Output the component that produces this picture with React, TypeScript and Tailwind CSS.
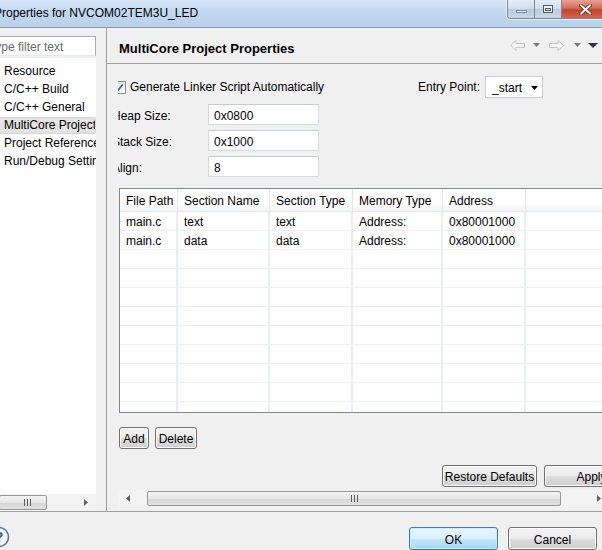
import React from "react";

function WinButton({ children, className = "" }: { children: React.ReactNode; className?: string }) {
  return (
    <div
      className={
        "h-[22px] shrink-0 flex items-center justify-center pt-[2px] rounded-[3px] border border-[#707070] bg-[linear-gradient(180deg,#f2f2f2_0%,#ebebeb_50%,#dddddd_51%,#cfcfcf_100%)] shadow-[inset_0_0_0_1px_#fcfcfc] text-[12px] text-black whitespace-nowrap " +
        className
      }
    >
      {children}
    </div>
  );
}

function Checkbox() {
  return (
    <div className="w-[13px] h-[13px] shrink-0 border border-[#8e8f8f] bg-[linear-gradient(135deg,#dcdcdc_0%,#ffffff_100%)] p-[2px] flex">
      <div className="flex-1 bg-[linear-gradient(135deg,#e6e6e6,#fbfbfb)] relative">
        <svg width="9" height="9" viewBox="0 0 9 9" className="absolute -left-[1px] -top-[1px]">
          <path d="M1.5 4.5 L3.5 6.8 L7.8 1.2" fill="none" stroke="#4a5f97" strokeWidth="1.7" />
        </svg>
      </div>
    </div>
  );
}

function Field({ value }: { value: string }) {
  return (
    <div className="w-[111px] h-[21px] shrink-0 bg-white border border-[#d5dae2] border-t-[#c6cbd3] flex items-center pl-[5px] pt-[2px] text-[12px]">
      {value}
    </div>
  );
}

function LeftArrowTri() {
  return (
    <svg width="4" height="7" viewBox="0 0 4 7">
      <path d="M4 0 L0 3.5 L4 7 Z" fill="#606060" />
    </svg>
  );
}
function RightArrowTri() {
  return (
    <svg width="4" height="7" viewBox="0 0 4 7">
      <path d="M0 0 L4 3.5 L0 7 Z" fill="#606060" />
    </svg>
  );
}

function Grip() {
  return (
    <div className="flex gap-[2px]">
      <div className="w-[1px] h-[7px] bg-[#5b5b5b]" />
      <div className="w-[1px] h-[7px] bg-[#5b5b5b]" />
      <div className="w-[1px] h-[7px] bg-[#5b5b5b]" />
    </div>
  );
}

const cols = ["File Path", "Section Name", "Section Type", "Memory Type", "Address"];

const rows = [
  ["main.c", "text", "text", "Address:", "0x80001000"],
  ["main.c", "data", "data", "Address:", "0x80001000"],
  ["", "", "", "", ""],
  ["", "", "", "", ""],
  ["", "", "", "", ""],
  ["", "", "", "", ""],
  ["", "", "", "", ""],
  ["", "", "", "", ""],
  ["", "", "", "", ""],
  ["", "", "", "", ""],
  ["", "", "", "", ""],
];

const colClasses = ["w-[58px]", "w-[92px]", "w-[83px]", "w-[90px]", "w-[83px]"];

export default function App() {
  return (
    <div className="w-[602px] h-[550px] overflow-hidden bg-[#f0f0f0] flex flex-col text-[12px] leading-none text-black font-['Liberation_Sans',Arial,sans-serif]">
      {/* Title bar */}
      <div className="h-[28px] shrink-0 border-b border-[#8d9aa8] bg-[linear-gradient(180deg,#d6e6f7_0%,#c3d9f0_40%,#b9d0ea_100%)] flex overflow-hidden">
        <div className="w-[513px] shrink-0 -ml-[6px] pt-[7px] text-[12px] text-black whitespace-nowrap">
          Properties for NVCOM02TEM3U_LED
        </div>
        <div className="flex shrink-0 h-[19px] rounded-bl-[4px] border border-t-0 border-[#7b8898] overflow-hidden shadow-[0_0_0_1px_rgba(255,255,255,0.6)]">
          <div className="w-[27px] h-full flex items-center justify-center bg-[linear-gradient(180deg,#e4eef9_0%,#cddcec_50%,#b9cadd_51%,#c9d8e8_100%)] border-r border-[#7b8898]">
            <div className="w-[11px] h-[3px] mt-[4px] bg-[#eef2f7] border border-[#7f8da0]" />
          </div>
          <div className="w-[27px] h-full flex items-center justify-center bg-[linear-gradient(180deg,#e4eef9_0%,#cddcec_50%,#b9cadd_51%,#c9d8e8_100%)] border-r border-[#7b8898]">
            <div className="w-[10px] h-[8px] border border-[#4e5d70] bg-[#eef2f7] flex items-center justify-center">
              <div className="w-[6px] h-[3px] border border-[#4e5d70] mt-[1px]" />
            </div>
          </div>
          <div className="w-[44px] h-full flex items-center justify-center bg-[linear-gradient(180deg,#e8a393_0%,#d46c58_45%,#c2432d_55%,#d6654a_100%)]">
            <svg width="13" height="11" viewBox="0 0 13 11" className="ml-[2px]">
              <path d="M2 1.5 L11 9.5 M11 1.5 L2 9.5" stroke="#5a2a22" strokeWidth="3.6" strokeLinecap="square" />
              <path d="M2 1.5 L11 9.5 M11 1.5 L2 9.5" stroke="#ffffff" strokeWidth="2" strokeLinecap="square" />
            </svg>
          </div>
        </div>
      </div>

      {/* Main */}
      <div className="h-[484px] shrink-0 flex border-b border-[#a0a0a0]">
        {/* Left panel */}
        <div className="w-[107px] shrink-0 border-r border-[#a0a0a0] flex flex-col">
          <div className="pt-[8px] pb-[2px] w-[96px]">
            <div className="w-[109px] -ml-[13px] h-[20px] bg-white border border-[#abadb3] border-b-[#e3e9ef] flex items-center pl-[4px] pt-[1px] text-[#6d6d6d] whitespace-nowrap">
              type filter text
            </div>
          </div>
          <div className="w-[96px] flex-1 bg-white flex flex-col overflow-hidden">
            <div className="flex-1 pt-[4px] flex flex-col">
              {["Resource", "C/C++ Build", "C/C++ General", "MultiCore Project Properties", "Project References", "Run/Debug Settings"].map(
                (t, i) => (
                  <div key={t} className="h-[18px] flex items-center">
                    <div
                      className={
                        "w-[96px] h-[17px] flex items-center pl-[4px] whitespace-nowrap overflow-hidden " +
                        (i === 3 ? "bg-[#e3e3e3] border border-l-0 border-[#d6d6d6] rounded-r-[2px]" : "")
                      }
                    >
                      {t}
                    </div>
                  </div>
                )
              )}
            </div>
            <div className="h-[17px] shrink-0 bg-[#f3f3f3] flex items-center">
              <div className="w-[48px] h-[15px] rounded-[2px] border border-[#979797] bg-[linear-gradient(180deg,#f3f3f3_0%,#e8e8e8_50%,#d6d6d6_51%,#e0e0e0_100%)] flex items-center justify-center pl-[8px] -ml-[1px]">
                <Grip />
              </div>
              <div className="ml-[37px]">
                <RightArrowTri />
              </div>
            </div>
          </div>
        </div>

        {/* Right panel */}
        <div className="flex-1 flex flex-col min-w-0">
          <div className="h-[36px] shrink-0 border-b border-[#a0a0a0] flex items-center pl-[12px] pt-[5px]">
            <div className="font-bold text-[13px] whitespace-nowrap">MultiCore Project Properties</div>
            <div className="flex-1" />
            <div className="flex items-center -mt-[6px] w-[92px] shrink-0 ml-[2px]">
              <svg width="15" height="11" viewBox="0 0 15 11">
                <path d="M0.5 5.5 L6 0.5 L6 3.5 L14.5 3.5 L14.5 7.5 L6 7.5 L6 10.5 Z" fill="#f7f7f7" stroke="#c2c2c2" />
              </svg>
              <svg width="7" height="4" viewBox="0 0 7 4" className="ml-[8px]">
                <path d="M0 0 L7 0 L3.5 4 Z" fill="#7b7b7b" />
              </svg>
              <svg width="15" height="11" viewBox="0 0 15 11" className="ml-[9px]">
                <path d="M14.5 5.5 L9 0.5 L9 3.5 L0.5 3.5 L0.5 7.5 L9 7.5 L9 10.5 Z" fill="#f7f7f7" stroke="#c2c2c2" />
              </svg>
              <svg width="7" height="4" viewBox="0 0 7 4" className="ml-[10px]">
                <path d="M0 0 L7 0 L3.5 4 Z" fill="#7b7b7b" />
              </svg>
              <svg width="10" height="5" viewBox="0 0 10 5" className="ml-[7px]">
                <path d="M0 0 L10 0 L5 5 Z" fill="#2f2f5c" />
              </svg>
            </div>
          </div>

          <div className="flex-1 pl-[11px] flex flex-col min-w-0">
            <div className="flex-1 overflow-hidden flex flex-col">
              {/* Checkbox + entry */}
              <div className="mt-[12px] h-[22px] flex items-center mr-[59px]">
                <div className="-ml-[5px] flex items-center">
                  <Checkbox />
                  <span className="ml-[4px] whitespace-nowrap">Generate Linker Script Automatically</span>
                </div>
                <div className="flex-1" />
                <span className="whitespace-nowrap mr-[5px]">Entry Point:</span>
                <div className="w-[58px] h-[22px] bg-white border border-[#c9ccd2] flex items-center pl-[6px] pt-[1px] justify-between pr-[4px]">
                  <span>_start</span>
                  <svg width="7" height="4" viewBox="0 0 7 4">
                    <path d="M0 0 L7 0 L3.5 4 Z" fill="#000" />
                  </svg>
                </div>
              </div>

              {/* Fields */}
              <div className="mt-[6px] flex flex-col gap-[5px]">
                {[
                  ["Heap Size:", "0x0800"],
                  ["Stack Size:", "0x1000"],
                  ["Align:", "8"],
                ].map(([l, v]) => (
                  <div key={l} className="flex items-center h-[21px]">
                    <div className="w-[96px] -ml-[6px] pt-[2px] shrink-0 whitespace-nowrap">{l}</div>
                    <Field value={v} />
                  </div>
                ))}
              </div>

              {/* Table */}
              <div className="mt-[11px] ml-[1px] h-[225px] shrink-0 border border-[#828790] border-r-0 bg-white overflow-hidden flex flex-col">
                <div className="h-[23px] shrink-0 flex bg-[linear-gradient(180deg,#ffffff_0%,#ffffff_60%,#f3f4f6_100%)] border-b border-[#e5e5e5]">
                  {cols.map((c, i) => (
                    <div
                      key={c}
                      className={colClasses[i] + " shrink-0 h-full flex items-center pl-[6px] pt-[2px] border-r border-[#e3e6ea] whitespace-nowrap"}
                    >
                      {c}
                    </div>
                  ))}
                  <div className="flex-1" />
                </div>
                {rows.map((r, ri) => (
                  <div key={ri} className="h-[19px] shrink-0 flex border-b border-[#f0f0f0]">
                    {r.map((cell, ci) => (
                      <div
                        key={ci}
                        className={colClasses[ci] + " shrink-0 h-full flex items-center pl-[6px] pt-[2px] border-r-2 border-[#e9eef6] whitespace-nowrap"}
                      >
                        {cell}
                      </div>
                    ))}
                    <div className="flex-1" />
                  </div>
                ))}
              </div>

              {/* Add / Delete */}
              <div className="mt-[14px] ml-[1px] flex gap-[6px]">
                <WinButton className="w-[30px]">Add</WinButton>
                <WinButton className="w-[42px]">Delete</WinButton>
              </div>

              {/* Restore / Apply */}
              <div className="mt-[16px] ml-[324px] flex gap-[7px]">
                <WinButton className="w-[95px]">Restore Defaults</WinButton>
                <WinButton className="w-[95px]">Apply</WinButton>
              </div>

              {/* Horizontal scrollbar */}
              <div className="mt-[3px] h-[17px] shrink-0 bg-[#f3f3f3] flex items-center">
                <div className="ml-[8px]">
                  <LeftArrowTri />
                </div>
                <div className="ml-[17px] w-[414px] h-[15px] rounded-[2px] border border-[#979797] bg-[linear-gradient(180deg,#f3f3f3_0%,#e8e8e8_50%,#d6d6d6_51%,#e0e0e0_100%)] flex items-center justify-center">
                  <Grip />
                </div>
                <div className="ml-[36px]">
                  <RightArrowTri />
                </div>
              </div>
            </div>
          </div>
        </div>
      </div>

      {/* Bottom bar */}
      <div className="flex-1 flex items-start pt-[15px]">
        <svg width="22" height="22" viewBox="0 0 22 22" className="-ml-[12px] -mt-[1px] shrink-0">
          <circle cx="11" cy="11" r="9.5" fill="#f4f6f9" stroke="#5c7495" strokeWidth="1.6" />
          <text x="11" y="16" textAnchor="middle" fontSize="14" fontWeight="bold" fill="#3d5578" fontFamily="Liberation Sans, Arial, sans-serif">?</text>
        </svg>
        <div className="ml-[399px] flex gap-[10px]">
          <div className="w-[89px] h-[23px] pt-[2px] rounded-[3px] border border-[#3c7fb1] bg-[linear-gradient(180deg,#eaf6fd_0%,#d9f0fc_50%,#bee6fd_51%,#a7d9f5_100%)] shadow-[inset_0_0_0_1px_#c7eafc] flex items-center justify-center">
            OK
          </div>
          <WinButton className="w-[89px] h-[23px]">Cancel</WinButton>
        </div>
      </div>
    </div>
  );
}
